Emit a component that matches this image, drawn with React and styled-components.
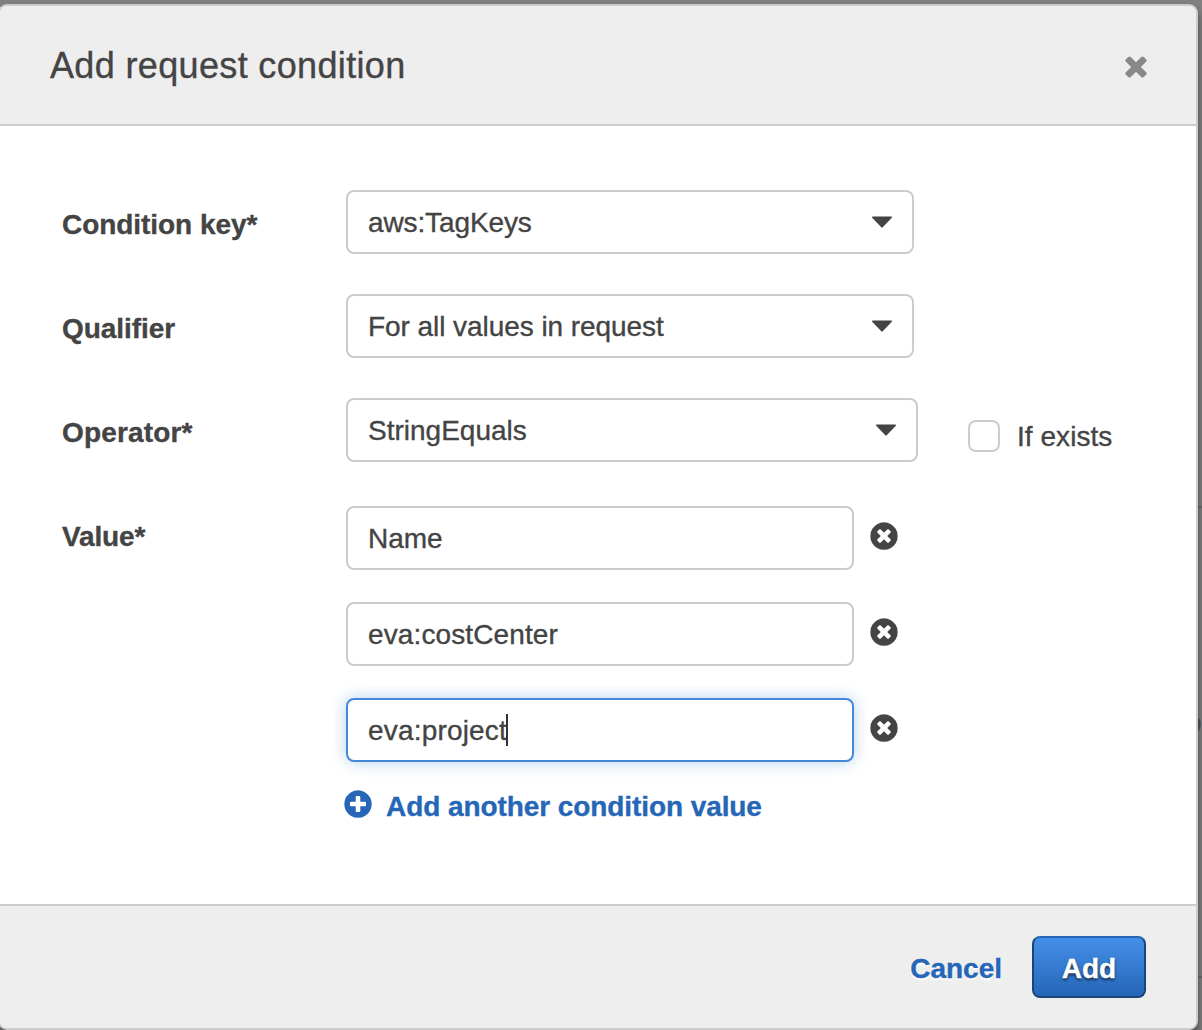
import React from "react";
import styled, { createGlobalStyle, css } from "styled-components";

const Global = createGlobalStyle`
  *, *::before, *::after { box-sizing: border-box; }
  html, body { margin: 0; padding: 0; }
  body {
    background: #808080;
    color: #444;
    font-family: "Liberation Sans", Arial, sans-serif;
    font-size: 28px;
    line-height: 32px;
    -webkit-text-stroke: 0.35px currentColor;
    overflow: hidden;
  }
`;

const Backdrop = styled.div`
  position: relative;
  width: 1202px;
  height: 1030px;
  padding-top: 4px;
  overflow: hidden;
  background: #808080;
`;

const PageRule = styled.div`
  position: absolute;
  right: 0;
  top: ${(p) => p.$top}px;
  width: 8px;
  height: 2px;
  background: #6c6c6c;
`;

const PageGlyph = styled.span`
  position: absolute;
  left: 1186px;
  top: 707px;
  color: #555;
`;

const Shade = styled.div`
  position: relative;
  width: 1198px;
  border-radius: 9px;
  box-shadow: 0 6px 8px rgba(0, 0, 0, 0.45);
`;

const Dialog = styled.section`
  display: flex;
  flex-direction: column;
  width: 1200px;
  height: 1026px;
  margin-left: -2px;
  border: 2px solid #ccc;
  border-radius: 9px;
  background: #fff;
  overflow: hidden;
`;

const Header = styled.header`
  display: flex;
  align-items: center;
  justify-content: space-between;
  height: 120px;
  padding: 0 44px 0 50px;
  background: #eee;
  border-bottom: 2px solid #ccc;
`;

const Title = styled.h1`
  margin: 0;
  padding-top: 2px;
  font-size: 36px;
  line-height: 44px;
  font-weight: 400;
  letter-spacing: 0.35px;
`;

const Body = styled.main`
  flex: 1;
  padding: 64px 62px 0;
`;

const Row = styled.div`
  display: flex;
  align-items: flex-start;
  margin-bottom: ${(p) => p.$gap ?? 40}px;
`;

const Label = styled.label`
  width: 284px;
  padding-top: ${(p) => p.$top ?? 19}px;
  font-weight: 700;
  letter-spacing: ${(p) => p.$ls ?? 0}px;
`;

const Control = styled.div`
  display: flex;
  align-items: center;
  height: 64px;
  border: 2px solid #ccc;
  border-radius: 8px;
  background: #fff;
  padding: 2px 20px 0;
  letter-spacing: ${(p) => p.$ls ?? 0}px;
`;

const Select = styled(Control)`
  width: ${(p) => p.$width ?? 568}px;
  justify-content: space-between;
  svg { margin-bottom: 2px; }
`;

const Field = styled(Control)`
  width: 508px;
  ${(p) =>
    p.$focused &&
    css`
      border-color: #4489d8;
      box-shadow: 0 0 16px rgba(68, 137, 216, 0.4);
    `}
`;

const Caret = styled.span`
  width: 2px;
  height: 32px;
  margin: 0 0 2px -1px;
  background: #333;
`;

const CheckOption = styled.label`
  display: flex;
  align-items: center;
  gap: 17px;
  margin: 22px 0 0 50px;
`;

const Box = styled.span`
  width: 32px;
  height: 32px;
  border: 2px solid #ccc;
  border-radius: 8px;
  background: #fff;
`;

const CheckText = styled.span`
  padding-top: 1px;
  margin-bottom: -1px;
  letter-spacing: 0.05px;
`;

const Values = styled.div`
  display: flex;
  flex-direction: column;
  gap: 32px;
`;

const ValueRow = styled.div`
  display: flex;
  align-items: center;
  gap: 14px;
`;

const IconButton = styled.button`
  display: flex;
  padding: 0;
  border: 0;
  background: none;
  color: ${(p) => p.$color ?? "#444"};
  margin-bottom: ${(p) => p.$lift ?? 4}px;
`;

const AddLink = styled.a`
  display: flex;
  align-items: center;
  gap: 12px;
  margin: -6px 0 0 -4px;
  color: #2566b7;
  font-weight: 700;
  letter-spacing: -0.08px;
  svg { margin-bottom: 5px; }
`;

const Footer = styled.footer`
  display: flex;
  align-items: center;
  justify-content: flex-end;
  gap: 30px;
  height: 124px;
  padding-right: 50px;
  background: #eee;
  border-top: 2px solid #ccc;
`;

const Cancel = styled.a`
  color: #2566b7;
  font-weight: 700;
  text-shadow: 0 2px 2px #fff;
  margin-top: 4px;
`;

const Primary = styled.button`
  width: 114px;
  height: 62px;
  padding: 4px 0 0;
  border: 2px solid #1a4578;
  border-top-color: #2566b7;
  border-radius: 8px;
  background: linear-gradient(#448fe8, #2566b7);
  color: #fff;
  font: 700 28px/32px "Liberation Sans", Arial, sans-serif;
  -webkit-text-stroke: 0.35px #fff;
  text-shadow: 0 2px 3px rgba(0, 0, 0, 0.7);
`;

const RING =
  "q0 209-103 385.5t-279.5 279.5-385.5 103-385.5-103-279.5-279.5-103-385.5 103-385.5 279.5-279.5 385.5-103 385.5 103 279.5 279.5 103 385.5z";

const PATHS = {
  times:
    "M1490 1322q0 40-28 68l-136 136q-28 28-68 28t-68-28l-294-294-294 294q-28 28-68 28t-68-28l-136-136q-28-28-28-68t28-68l294-294-294-294q-28-28-28-68t28-68l136-136q28-28 68-28t68 28l294 294 294-294q28-28 68-28t68 28l136 136q28 28 28 68t-28 68l-294 294 294 294q28 28 28 68z",
  remove:
    "M1277 1122q0-26-19-45l-181-181 181-181q19-19 19-45 0-27-19-46l-90-90q-19-19-46-19-26 0-45 19l-181 181-181-181q-19-19-45-19-27 0-46 19l-90 90q-19 19-19 46 0 26 19 45l181 181-181 181q-19 19-19 45 0 27 19 46l90 90q19 19 46 19 26 0 45-19l181-181 181 181q19 19 45 19 27 0 46-19l90-90q19-19 19-46zm387-226" +
    RING,
  plus:
    "M1344 960v-128q0-26-19-45t-45-19h-256v-256q0-26-19-45t-45-19h-128q-26 0-45 19t-19 45v256h-256q-26 0-45 19t-19 45v128q0 26 19 45t45 19h256v256q0 26 19 45t45 19h128q26 0 45-19t19-45v-256h256q26 0 45-19t19-45zm320-64" +
    RING,
};

function Icon({ name, top = 0 }) {
  return (
    <svg width="32" height="32" viewBox={`0 ${top} 1792 1792`} fill="currentColor">
      <path d={PATHS[name]} />
    </svg>
  );
}

function Arrow() {
  return (
    <svg width="20" height="12" viewBox="0 0 20 12" fill="currentColor">
      <path d="M0.5 0.5H19.5Q20.4 1 19.6 1.9L10.7 11.3Q10 12 9.3 11.3L0.4 1.9Q-0.4 1 0.5 0.5Z" />
    </svg>
  );
}

const VALUES = [
  { text: "Name", ls: 0 },
  { text: "eva:costCenter", ls: 0.12 },
  { text: "eva:project", ls: 0.18, focused: true },
];

export default function App() {
  return (
    <Backdrop>
      <Global />
      <PageRule $top={506} />
      <PageRule $top={976} />
      <PageGlyph>o</PageGlyph>
      <Shade>
        <Dialog>
          <Header>
            <Title>Add request condition</Title>
            <IconButton $color="#888" $lift={-3} aria-label="Close">
              <Icon name="times" top={64} />
            </IconButton>
          </Header>
          <Body>
            <Row>
              <Label $ls={-0.05}>Condition key*</Label>
              <Select $ls={-0.12}>aws:TagKeys<Arrow /></Select>
            </Row>
            <Row>
              <Label $ls={-0.05}>Qualifier</Label>
              <Select $ls={-0.06}>For all values in request<Arrow /></Select>
            </Row>
            <Row $gap={44}>
              <Label $ls={0.15}>Operator*</Label>
              <Select $width={572}>StringEquals<Arrow /></Select>
              <CheckOption><Box /><CheckText>If exists</CheckText></CheckOption>
            </Row>
            <Row>
              <Label $top={15} $ls={-0.15}>Value*</Label>
              <Values>
                {VALUES.map((v) => (
                  <ValueRow key={v.text}>
                    <Field $focused={v.focused} $ls={v.ls}>
                      {v.text}
                      {v.focused && <Caret />}
                    </Field>
                    <IconButton aria-label="Remove"><Icon name="remove" /></IconButton>
                  </ValueRow>
                ))}
                <AddLink><Icon name="plus" />Add another condition value</AddLink>
              </Values>
            </Row>
          </Body>
          <Footer>
            <Cancel>Cancel</Cancel>
            <Primary>Add</Primary>
          </Footer>
        </Dialog>
      </Shade>
    </Backdrop>
  );
}
